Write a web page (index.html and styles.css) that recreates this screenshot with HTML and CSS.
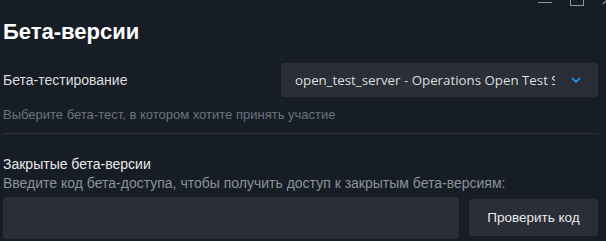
FILE: index.html
```html
<!DOCTYPE html>
<html lang="ru">
<head>
<meta charset="utf-8">
<link rel="stylesheet" href="styles.css">
</head>
<body>
<div class="page">
  <div class="winctl">
    <span class="min"></span>
    <span class="max"></span>
    <svg class="close" width="10" height="10" viewBox="0 0 10 10"><path d="M1 9 L9 1 M1 1 L9 9" stroke="#8f959c" stroke-width="1.2"/></svg>
  </div>
  <h1 class="title">Бета-версии</h1>
  <div class="row">
    <div class="label">Бета-тестирование</div>
    <div class="select">
      <span class="select-text">open_test_server - Operations Open Test Server</span>
      <svg class="chev" width="10" height="6" viewBox="0 0 10 6"><path d="M1 1 L5 5 L9 1" fill="none" stroke="#1a9fff" stroke-width="1.6"/></svg>
    </div>
  </div>
  <div class="desc">Выберите бета-тест, в котором хотите принять участие</div>
  <div class="sep"></div>
  <div class="sub">Закрытые бета-версии</div>
  <div class="desc2">Введите код бета-доступа, чтобы получить доступ к закрытым бета-версиям:</div>
  <div class="coderow">
    <div class="input"></div>
    <div class="btn">Проверить код</div>
  </div>
</div>
</body>
</html>
```
FILE: styles.css
```css
html, body {
  margin: 0;
  padding: 0;
  background: #171d25;
  overflow: hidden;
}
body {
  width: 606px;
  height: 241px;
  font-family: "Liberation Sans", Arial, sans-serif;
}
.page {
  position: relative;
  padding: 0 8px 0 3px;
}
.winctl {
  position: absolute;
  top: -6px;
  right: -6px;
  display: flex;
  align-items: flex-start;
  gap: 18px;
}
.min {
  display: block;
  width: 14px;
  height: 1px;
  background: #8f959c;
  margin-top: 8px;
}
.max {
  display: block;
  width: 12px;
  height: 10px;
  border: 1px solid #8f959c;
}
.close {
  margin-top: 1px;
}
.title {
  margin: 0;
  padding-top: 19px;
  font-size: 22px;
  line-height: 25px;
  font-weight: bold;
  color: #ffffff;
}
.row {
  margin-top: 19px;
  display: flex;
  align-items: center;
  justify-content: space-between;
  height: 34px;
}
.label {
  font-size: 14px;
  color: #dcdedf;
}
.select {
  width: 317px;
  height: 34px;
  box-sizing: border-box;
  background: #2a2e36;
  border-radius: 3px;
  display: flex;
  align-items: center;
  padding: 0 17px 0 14px;
  gap: 16px;
}
.select-text {
  flex: 1;
  overflow: hidden;
  white-space: nowrap;
  font-family: "Open Sans", "Liberation Sans", sans-serif;
  font-size: 13.3px;
  color: #dcdedf;
}
.chev {
  flex: none;
}
.desc {
  margin-top: 10px;
  font-size: 13px;
  color: #6a737e;
}
.sep {
  margin-top: 11px;
  height: 1px;
  background: #2c3139;
}
.sub {
  margin-top: 22px;
  font-size: 14px;
  color: #e8e9ea;
}
.desc2 {
  margin-top: 3px;
  font-size: 14px;
  color: #8b929a;
}
.coderow {
  margin-top: 6px;
  display: flex;
  align-items: flex-start;
  gap: 10px;
}
.input {
  width: 456px;
  height: 42px;
  background: #2a2e36;
  border-radius: 3px;
}
.btn {
  margin-top: 2px;
  width: 129px;
  height: 37px;
  background: #2a2e36;
  border-radius: 3px;
  display: flex;
  align-items: center;
  justify-content: center;
  font-size: 13.5px;
  color: #e8e9ea;
}
```
